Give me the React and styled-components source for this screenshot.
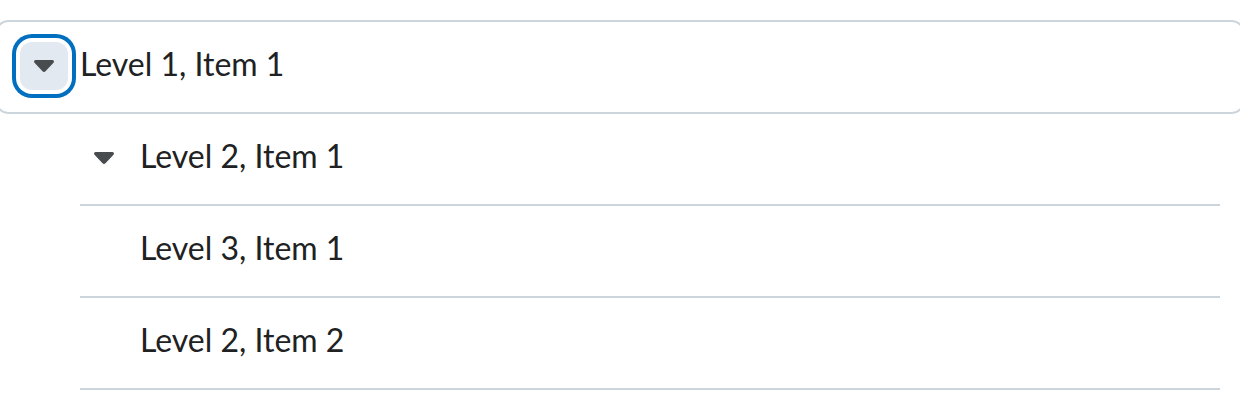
import React, { useState } from "react";
import styled, { createGlobalStyle } from "styled-components";

const GlobalStyle = createGlobalStyle`
  *, *::before, *::after { box-sizing: border-box; }
  body {
    margin: 0;
    background: #ffffff;
    color: #202122;
    font-family: Lato, "Liberation Sans", sans-serif;
    font-size: 32px;
    line-height: 48px;
    overflow-x: hidden;
  }
`;

const List = styled.ul`
  list-style: none;
  margin: 0 -4px;
  padding: 20px 0 0;
`;

const SubList = styled.ul`
  list-style: none;
  margin: 0;
  padding: 0;
`;

const Row = styled.div`
  display: flex;
  align-items: center;
  min-height: ${(p) => (p.$focused ? 94 : 92)}px;
  padding: ${(p) => (p.$focused ? "0 22px 2px" : "0 0 2px")};
  margin: ${(p) => (p.$focused ? 0 : "0 24px 0 84px")};
  border: 0 solid #cdd5dc;
  border-width: ${(p) => (p.$focused ? "2px" : "0 0 2px")};
  border-radius: ${(p) => (p.$focused ? 12 : 0)}px;
`;

const Toggle = styled.button`
  display: flex;
  align-items: center;
  justify-content: center;
  flex: none;
  width: 48px;
  height: 48px;
  margin-right: 12px;
  padding: 0;
  border: 0;
  border-radius: 12px;
  background: ${(p) => (p.$focused ? "#e3e9f1" : "transparent")};
  box-shadow: ${(p) => (p.$focused ? "0 0 0 4px #ffffff, 0 0 0 8px #006fbf" : "none")};
  outline: none;
  color: #494c4e;
`;

const Spacer = styled.span`
  flex: none;
  width: 60px;
`;

const Label = styled.span`
  padding-bottom: 4px;
  white-space: nowrap;
`;

const Caret = () => (
  <svg width="20" height="12" viewBox="0 0 20 12" aria-hidden="true">
    <path
      d="M1.6 0h16.8c1.4 0 2.1 1.7 1.1 2.7l-8 8.6c-.8.9-2.2.9-3 0l-8-8.6C-.5 1.7.2 0 1.6 0z"
      fill="currentColor"
    />
  </svg>
);

const data = [
  {
    label: "Level 1, Item 1",
    focused: true,
    children: [
      {
        label: "Level 2, Item 1",
        children: [{ label: "Level 3, Item 1" }],
      },
      { label: "Level 2, Item 2" },
    ],
  },
];

function Item({ item }) {
  const [open, setOpen] = useState(true);
  return (
    <li>
      <Row $focused={item.focused}>
        {item.children ? (
          <Toggle
            type="button"
            $focused={item.focused}
            aria-expanded={open}
            aria-label={item.label}
            onClick={() => setOpen(!open)}
          >
            <Caret />
          </Toggle>
        ) : (
          <Spacer />
        )}
        <Label>{item.label}</Label>
      </Row>
      {item.children && open && (
        <SubList>
          {item.children.map((child) => (
            <Item key={child.label} item={child} />
          ))}
        </SubList>
      )}
    </li>
  );
}

export default function App() {
  return (
    <>
      <GlobalStyle />
      <List>
        {data.map((item) => (
          <Item key={item.label} item={item} />
        ))}
      </List>
    </>
  );
}
